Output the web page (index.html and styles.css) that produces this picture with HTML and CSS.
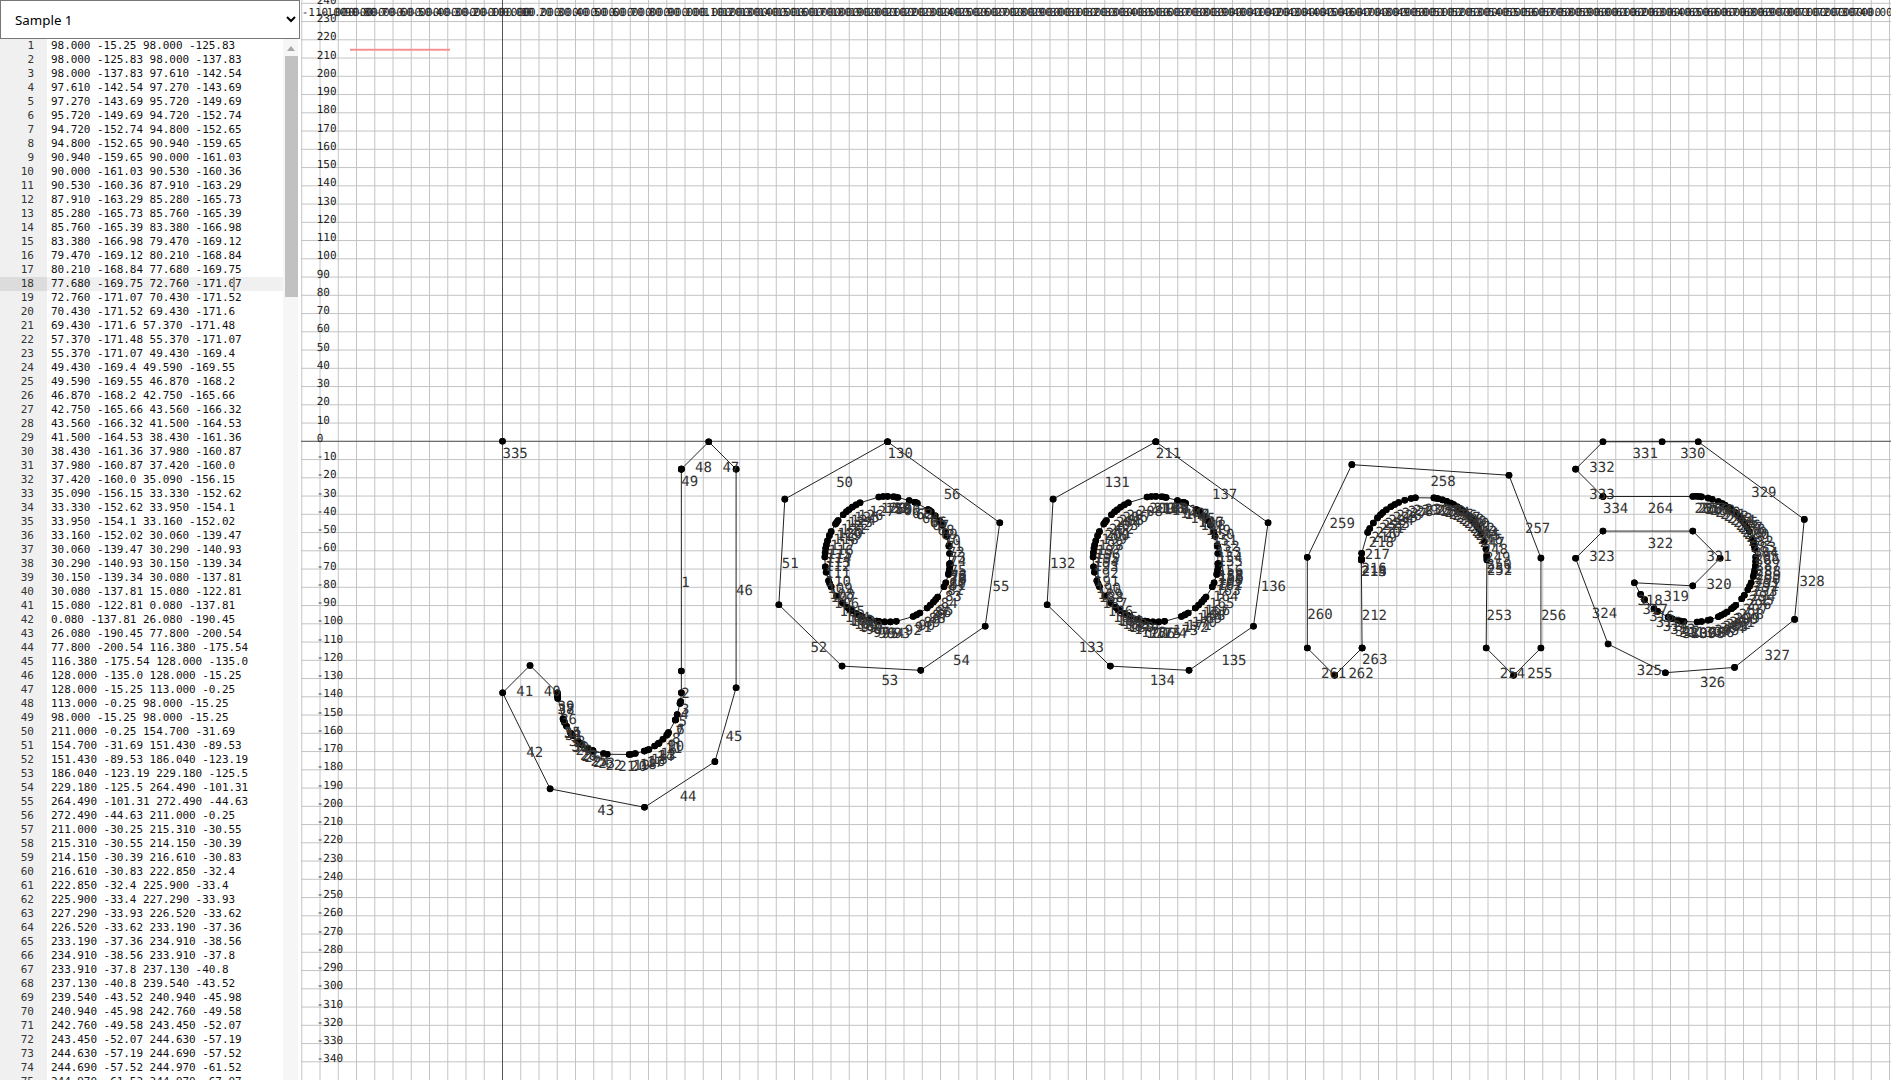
FILE: index.html
```html
<!DOCTYPE html>
<html lang="en">
<head>
  <meta charset="UTF-8" />
  <meta name="viewport" content="width=device-width, initial-scale=1.0" />
  <title>Glyph Outline Viewer</title>
  <link rel="stylesheet" href="styles.css">
</head>
<body>
  <aside class="sidebar">
    <select class="sample-select">
      <option>Sample 1</option>
      <option>Sample 2</option>
    </select>
    <div class="editor">
      <div class="lines" id="lines"></div>
      <div class="scrollbar">
        <div class="scroll-up"></div>
        <div class="scroll-thumb"></div>
      </div>
    </div>
  </aside>
  <main class="stage">
    <svg class="plot" id="plot" xmlns="http://www.w3.org/2000/svg"></svg>
  </main>
  <script src="script.js"></script>
</body>
</html>
```

FILE: styles.css
```css
html, body {
  margin: 0;
  padding: 0;
  height: 100%;
  overflow: hidden;
  background: #fff;
}

body {
  display: flex;
}

.sidebar {
  width: 301px;
  flex: none;
  display: flex;
  flex-direction: column;
}

.sample-select {
  height: 39px;
  width: 300px;
  flex: none;
  padding-left: 10px;
  font-family: "Noto Sans", sans-serif;
  font-size: 13.33px;
  color: #000;
  background: #fff;
}

.editor {
  flex: 1;
  min-height: 0;
  display: flex;
}

.lines {
  flex: 1;
  min-width: 0;
  overflow: hidden;
  font-family: "DejaVu Sans Mono", monospace;
  font-size: 11px;
  line-height: 14px;
  color: #111;
}

.row {
  display: flex;
  height: 14px;
  white-space: pre;
}

.num {
  width: 34px;
  padding-right: 13px;
  flex: none;
  text-align: right;
  background: #f0f0f0;
  color: #333;
}

.txt {
  position: relative;
  flex: 1;
  padding-left: 4px;
  letter-spacing: -0.05px;
}

.row.active .num {
  background: #dcdcdc;
}

.row.active .txt {
  background: #f0f0f0;
}

.cursor {
  position: absolute;
  top: 0;
  left: 186px;
  width: 2px;
  height: 14px;
  background: #999;
}

.scrollbar {
  width: 18px;
  flex: none;
  padding-left: 2px;
  padding-right: 3px;
  box-sizing: border-box;
  background: linear-gradient(to right, #f6f6f6 15px, #fff 15px);
}

.scroll-up {
  width: 0;
  height: 0;
  margin: 7px 0 5px 2px;
  border-left: 4px solid transparent;
  border-right: 4px solid transparent;
  border-bottom: 5px solid #a8a8a8;
}

.scroll-thumb {
  height: 241px;
  background: #c1c1c1;
}

.stage {
  flex: 1;
  min-width: 0;
}

.plot {
  display: block;
  width: 100%;
  height: 100%;
}

.grid-line {
  stroke: #c4c4c4;
  stroke-width: 1;
}

.axis-line {
  stroke: #555;
  stroke-width: 1;
}

.scale-bar {
  stroke: #f79090;
  stroke-width: 2;
}

.ruler-label {
  font-family: "DejaVu Sans Mono", monospace;
  font-size: 11px;
  fill: #222;
  text-rendering: geometricPrecision;
}

.seg {
  stroke: #222;
  stroke-width: 1;
}

.dot {
  fill: #000;
}

.seg-label {
  font-family: "DejaVu Sans Mono", monospace;
  font-size: 14px;
  fill: #333;
  text-rendering: geometricPrecision;
}
```

FILE: script.js
```js
const SCALE = 1.825;
const ORIGIN_X = 201.5; // plot starts at x=301 on the page
const ORIGIN_Y = 441.3;
const VISIBLE_ROWS = 75;

const toX = x => ORIGIN_X + x * SCALE;
const toY = y => ORIGIN_Y - y * SCALE;

// angles clockwise from the top of the ring, given as [from, to, count]
function ring(cx, cy, r, clusters) {
  const pts = [];
  clusters.forEach(([from, to, n]) => {
    for (let i = 0; i < n; i++) {
      const deg = n === 1 ? from : from + (to - from) * i / (n - 1);
      const a = deg * Math.PI / 180;
      pts.push([+(cx + r * Math.sin(a)).toFixed(2), +(cy + r * Math.cos(a)).toFixed(2)]);
    }
  });
  return pts;
}

const shift = (pts, dx) => pts.map(([x, y]) => [x + dx, y]);

const hookJ = [
  [98, -15.25], [98, -125.83], [98, -137.83], [97.61, -142.54], [97.27, -143.69],
  [95.72, -149.69], [94.72, -152.74], [94.8, -152.65], [90.94, -159.65], [90, -161.03],
  [90.53, -160.36], [87.91, -163.29], [85.28, -165.73], [85.76, -165.39], [83.38, -166.98],
  [79.47, -169.12], [80.21, -168.84], [77.68, -169.75], [72.76, -171.07], [70.43, -171.52],
  [69.43, -171.6], [57.37, -171.48], [55.37, -171.07], [49.43, -169.4], [49.59, -169.55],
  [46.87, -168.2], [42.75, -165.66], [43.56, -166.32], [41.5, -164.53], [38.43, -161.36],
  [37.98, -160.87], [37.42, -160], [35.09, -156.15], [33.33, -152.62], [33.95, -154.1],
  [33.16, -152.02], [30.06, -139.47], [30.29, -140.93], [30.15, -139.34], [30.08, -137.81],
  [15.08, -122.81], [0.08, -137.81], [26.08, -190.45], [77.8, -200.54], [116.38, -175.54],
  [128, -135], [128, -15.25], [113, -0.25], [98, -15.25], [98, -15.25]
];

const outerO = [
  [211, -0.25], [154.7, -31.69], [151.43, -89.53], [186.04, -123.19], [229.18, -125.5],
  [264.49, -101.31], [272.49, -44.63], [211, -0.25]
];

const innerO = [
  [211, -30.25], [215.31, -30.55], [214.15, -30.39], [216.61, -30.83], [222.85, -32.4],
  [225.9, -33.4], [227.29, -33.93], [226.52, -33.62], [233.19, -37.36], [234.91, -38.56],
  [233.91, -37.8], [237.13, -40.8], [239.54, -43.52], [240.94, -45.98], [242.76, -49.58],
  [243.45, -52.07], [244.63, -57.19], [244.69, -57.52], [244.97, -61.52], [244.97, -67.07],
  ...ring(211, -64.6, 34.4, [
    [94, 97, 3], [100, 104, 3], [112, 116, 2], [127, 133, 3], [137, 141, 2], [149, 156, 3],
    [172, 188, 4], [190, 197, 2], [204, 210, 3], [215, 220, 3], [226, 234, 2], [244, 250, 3],
    [258, 263, 2], [272, 280, 3], [283, 287, 2], [292, 296, 2], [304, 308, 3], [315, 319, 2],
    [322, 334, 4], [352, 360, 3]
  ])
];

const archN = [[471, -113.25], ...ring(505, -65, 34.4, [
  0, 0, 0.5, 1, 6, 26, 30, 36, 42, 46, 49, 53, 58, 62, 66, 72, 78, 82,
  99, 101, 103, 107, 111, 115, 118, 122, 125, 128, 131, 135, 138,
  141, 143, 147, 150, 155, 163, 170, 176, 178, 180
].map(a => [a - 90, a - 90, 1])), [539, -113.25], [554, -128.25], [569, -113.25], [569, -64],
  [551.5, -18.6], [465.4, -12.8], [441, -63.6], [441, -113.25], [456, -128.25],
  [471, -113.25], [471, -113.25]];

const curlE = [
  [603, -30.25], [652.2, -30.25],
  ...ring(652.2, -64.6, 34.5, [
    [3, 8, 3], [14, 18, 2], [24, 28, 2], [31, 35, 2], [38, 42, 2], [44, 47, 2], [50, 56, 3],
    [60, 64, 2], [71, 75, 2], [78, 81, 2], [88, 92, 2], [96, 100, 2], [103, 106, 2],
    [112, 119, 3], [125, 129, 2], [137, 142, 3], [147, 153, 3], [156, 156, 1], [164, 166, 2],
    [172, 176, 2], [188, 194, 3], [199, 203, 2], [214, 218, 2], [230, 236, 2], [248, 248, 1]
  ]),
  [652.2, -79.2], [667.2, -64.1], [652.2, -49.2], [603, -49.2], [588, -64.1],
  [605.8, -111.1], [637.2, -126.8], [675.1, -123.9], [708, -97.6], [713.3, -42.8],
  [655.2, -0.25], [635.4, -0.25], [603, -0.25], [588, -15.25], [603, -30.25], [603, -30.25]
];

const contours = [
  hookJ,
  outerO,
  innerO,
  [[211, -0.25], [211, -0.25]],
  shift(outerO, 147),
  shift(innerO, 147),
  [[358, -0.25], [358, -0.25]],
  archN,
  curlE,
  [[0, 0], [0, 0]]
];

const segments = [];
contours.forEach(pts => {
  for (let i = 1; i < pts.length; i++) {
    segments.push([pts[i - 1], pts[i]]);
  }
});

// Segment list on the left, only the rows that fit are built
const fmtX = x => x.toFixed(3);
const fmtY = y => (Number.isInteger(y) ? y.toFixed(1) : String(y));

const lines = document.getElementById('lines');
segments.slice(0, VISIBLE_ROWS).forEach(([a, b], i) => {
  const row = document.createElement('div');
  row.className = i === 17 ? 'row active' : 'row';
  const num = document.createElement('div');
  num.className = 'num';
  num.textContent = i + 1;
  const txt = document.createElement('div');
  txt.className = 'txt';
  txt.textContent = `${fmtX(a[0])} ${fmtY(a[1])} ${fmtX(b[0])} ${fmtY(b[1])}`;
  if (i === 17) {
    const cursor = document.createElement('span');
    cursor.className = 'cursor';
    txt.appendChild(cursor);
  }
  row.append(num, txt);
  lines.appendChild(row);
});

// Plot
const plot = document.getElementById('plot');

function add(tag, cls, attrs, text) {
  const el = document.createElementNS('http://www.w3.org/2000/svg', tag);
  el.setAttribute('class', cls);
  Object.keys(attrs).forEach(k => el.setAttribute(k, attrs[k]));
  if (text !== undefined) el.textContent = text;
  plot.appendChild(el);
}

for (let k = -11; k <= 76; k++) {
  add('line', 'grid-line', { x1: toX(k * 10), x2: toX(k * 10), y1: 0, y2: 1080 });
}
for (let k = -34; k <= 24; k++) {
  add('line', 'grid-line', { x1: 0, x2: 1590, y1: toY(k * 10), y2: toY(k * 10) });
}

add('line', 'axis-line', { x1: toX(0), x2: toX(0), y1: 0, y2: 1080 });
add('line', 'axis-line', { x1: 0, x2: 1590, y1: toY(0), y2: toY(0) });

for (let k = -11; k <= 74; k++) {
  add('text', 'ruler-label', { x: toX(k * 10), y: 16 }, (k * 10).toFixed(3));
}
for (let k = -34; k <= 24; k++) {
  add('text', 'ruler-label', { x: 15.7, y: toY(k * 10) + 0.5 }, k * 10);
}

add('line', 'scale-bar', { x1: 49, x2: 149, y1: 49.7, y2: 49.7 });

segments.forEach(([a, b]) => {
  add('line', 'seg', { x1: toX(a[0]), y1: toY(a[1]), x2: toX(b[0]), y2: toY(b[1]) });
});
segments.forEach(([a, b]) => {
  add('circle', 'dot', { cx: toX(a[0]), cy: toY(a[1]), r: 3.3 });
  add('circle', 'dot', { cx: toX(b[0]), cy: toY(b[1]), r: 3.3 });
});
segments.forEach(([a, b], i) => {
  add('text', 'seg-label', {
    x: toX((a[0] + b[0]) / 2),
    y: toY((a[1] + b[1]) / 2) + 16.5
  }, i + 1);
});
```
